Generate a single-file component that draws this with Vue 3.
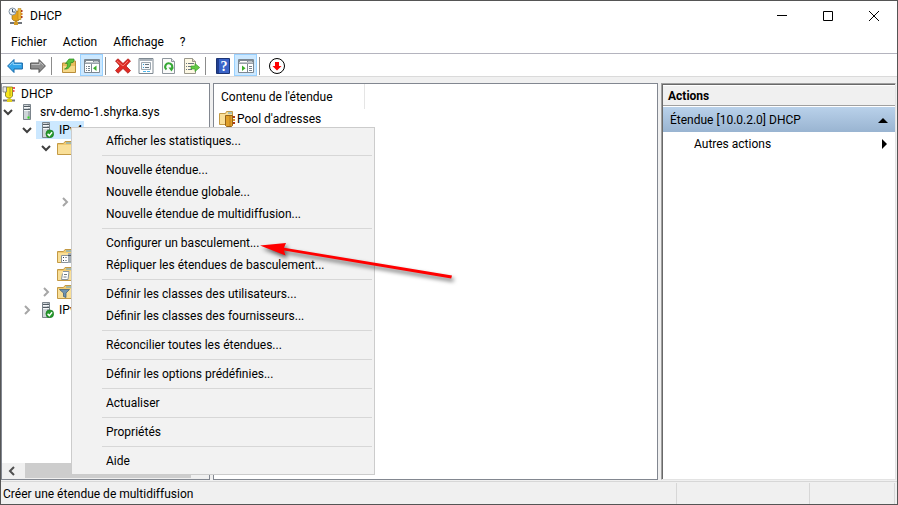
<script setup>
import { ref } from 'vue'

const menuBar = ['Fichier', 'Action', 'Affichage', '?']

const tools = [
  [{ id: 'back', label: 'Précédent' }, { id: 'forward', label: 'Suivant' }],
  [{ id: 'up', label: 'Dossier parent' }, { id: 'console', label: 'Arborescence', on: true }],
  [
    { id: 'delete', label: 'Supprimer' },
    { id: 'props', label: 'Propriétés' },
    { id: 'refresh', label: 'Actualiser' },
    { id: 'export', label: 'Exporter la liste' },
  ],
  [{ id: 'help', label: 'Aide' }, { id: 'pane', label: 'Volet Actions', on: true }],
  [{ id: 'down', label: 'Configurer' }],
]

const tree = ref([
  { level: 0, icon: 'dhcp', text: 'DHCP' },
  { level: 1, icon: 'server', text: 'srv-demo-1.shyrka.sys', open: true },
  { level: 2, icon: 'serverok', text: 'IPv4', open: true, selected: true },
  { level: 3, icon: 'folder', text: '', open: true },
  { level: 4 },
  { level: 4 },
  { level: 4, open: false },
  { level: 4 },
  { level: 4 },
  { level: 3, icon: 'options', text: '' },
  { level: 3, icon: 'policy', text: '' },
  { level: 3, icon: 'filter', text: '', open: false },
  { level: 2, icon: 'serverok', text: 'IPv6', open: false },
])

const indent = (row) => ({ paddingLeft: `${Math.max(row.level - 1, 0) * 19}px` })

const contextMenu = [
  ['Afficher les statistiques...'],
  ['Nouvelle étendue...', 'Nouvelle étendue globale...', 'Nouvelle étendue de multidiffusion...'],
  ['Configurer un basculement...', 'Répliquer les étendues de basculement...'],
  ['Définir les classes des utilisateurs...', 'Définir les classes des fournisseurs...'],
  ['Réconcilier toutes les étendues...'],
  ['Définir les options prédéfinies...'],
  ['Actualiser'],
  ['Propriétés'],
  ['Aide'],
]
</script>

<template>
  <div class="window">
    <header class="titlebar">
      <svg class="app-icon" viewBox="0 0 16 18">
        <path d="M4 4h8v8l-2 2H6l-2-2z" fill="#e3a21a" stroke="#8f6a17" stroke-width=".6" />
        <path d="M10 1.500h3v11h-3z" fill="#f0b83a" stroke="#a87a1c" stroke-width=".5" />
        <path d="M13 3h1.500v2H13zM13 9h1.500v2H13z" fill="#b03a16" />
        <path d="M13 6h1.500v2H13z" fill="#d8862a" />
        <path d="M7 13h2v3H7z" fill="#c28a1c" />
        <path d="M2 16h12" stroke="#70757b" stroke-width="2" />
        <path d="M6 15h4v3H6z" fill="#d39b28" />
        <circle cx="4.500" cy="4.500" r="3.500" fill="#eef3f8" stroke="#8393a3" />
        <path d="M4.500 2v3H7" fill="none" stroke="#3c5064" />
      </svg>
      <h1 class="title">DHCP</h1>
      <div class="caption">
        <button aria-label="Réduire"><svg viewBox="0 0 10 10"><path d="M0 4.500h10" /></svg></button>
        <button aria-label="Agrandir"><svg viewBox="0 0 10 10"><path d="M.5.5h9v9h-9z" /></svg></button>
        <button aria-label="Fermer"><svg viewBox="0 0 10 10"><path d="M0 0l10 10M10 0L0 10" /></svg></button>
      </div>
    </header>

    <nav class="menubar">
      <button v-for="m in menuBar" :key="m">{{ m }}</button>
    </nav>

    <div class="toolbar">
      <div v-for="(group, g) in tools" :key="g" class="group">
        <button v-for="t in group" :key="t.id" :class="{ on: t.on }" :aria-label="t.label">
          <svg v-if="t.id === 'back'" viewBox="0 0 16 16">
            <path d="M.6 8L7 1.500v3.500h8.400v6H7v3.500z" fill="#35a5ea" stroke="#1769a8" stroke-width="1" stroke-linejoin="round" />
            <path d="M2.500 7.500L6.200 4v2.500h8" fill="none" stroke="#92d4fa" />
          </svg>
          <svg v-else-if="t.id === 'forward'" viewBox="0 0 16 16">
            <path d="M15.400 8L9 1.500v3.500H.6v6H9v3.500z" fill="#8d8d8d" stroke="#555" stroke-width="1" stroke-linejoin="round" />
            <path d="M1.500 6.500h8.300V4l3.700 3.500" fill="none" stroke="#c0c0c0" />
          </svg>
          <svg v-else-if="t.id === 'up'" viewBox="0 0 16 16">
            <path d="M1.500 5h5l1-2h7v11.500h-13z" fill="#e8bd5c" stroke="#b98d3a" />
            <path d="M2 8h12v6H2z" fill="#f6d888" />
            <path d="M3.500 11C6.500 10 6.500 7.500 6.500 5.500H4.500L8 1h5v1.500l-1 2H9.800C9.800 8 8 11.500 3.500 11z" fill="#58c23c" stroke="#2d8a20" stroke-width=".7" />
          </svg>
          <svg v-else-if="t.id === 'console' || t.id === 'pane'" viewBox="0 0 16 16">
            <path d="M.5 1.500h15v13H.5z" fill="#fff" stroke="#7c8791" />
            <path d="M1 2h14v2.500H1z" fill="#7f8a94" />
            <path d="M2 3.500h7M10.500 3.500h1M12.500 3.500h1" stroke="#fff" />
            <path d="M1 5.500h14" stroke="#9aa3ab" />
            <template v-if="t.id === 'console'">
              <path d="M7.500 6v8" stroke="#7c8791" />
              <path d="M2 8.500h1M4 8.500h2M2 10.500h1M4 10.500h2M2 12.500h1M4 12.500h2" stroke="#77838e" />
              <path d="M12.500 7.500v5.500L9 10.250z" fill="#3aae2a" />
            </template>
            <template v-else>
              <path d="M9.500 6v8" stroke="#7c8791" />
              <path d="M11 8.500h3M11 10.500h3M11 12.500h3" stroke="#77838e" />
              <path d="M4 7.500v5.500l3.500-2.750z" fill="#3aae2a" />
            </template>
          </svg>
          <svg v-else-if="t.id === 'delete'" viewBox="0 0 16 16">
            <path d="M3 .8l5 4.700L13 .8l2.500 2.200L11 8l4.500 4.500-2.500 2.800L8 10.500l-5 4.800-2.500-2.800L5 8 .5 3z" fill="#e02a24" stroke="#a81512" stroke-width=".7" />
            <path d="M2 3l6 5 5-5" fill="none" stroke="#f47b70" />
          </svg>
          <svg v-else-if="t.id === 'props'" viewBox="0 0 16 16">
            <path d="M1 .5h14v15H1z" fill="#fff" stroke="#7f8992" />
            <path d="M1.500 1h13v2h-13z" fill="#aab2ba" />
            <path d="M3.500 4.500h9v7h-9z" fill="#f5f8fa" stroke="#9aa5ae" />
            <path d="M5 6.500h1M5 9.500h1" stroke="#2c9bd6" />
            <path d="M7 6.500h4M7 9.500h4" stroke="#68747e" />
            <path d="M5 13.500h3M9 13.500h3" stroke="#51b6e8" />
          </svg>
          <svg v-else-if="t.id === 'refresh'" viewBox="0 0 16 16">
            <path d="M1.500.5h9l3 3v12h-12z" fill="#fafafa" stroke="#8e969d" />
            <path d="M10.500.5v3h3" fill="#dfe3e6" stroke="#8e969d" />
            <path d="M5.500 11.500a3.500 3.500 0 1 1 5.500-1.500" fill="none" stroke="#35a835" stroke-width="2" />
            <path d="M7.500 9.500h5.500l-2.500 4z" fill="#35a835" />
          </svg>
          <svg v-else-if="t.id === 'export'" viewBox="0 0 16 16">
            <path d="M.5.5h8l3 3v12H.5z" fill="#fdf8e3" stroke="#99978b" />
            <path d="M8.500.5v3h3" fill="#e4dfc8" stroke="#99978b" />
            <path d="M2 5.500h1M4 5.500h6M2 8.500h1M4 8.500h4M2 11.500h1M4 11.500h4" stroke="#68747e" />
            <path d="M7 8h4V5.500L15.700 9.500 11 13.500V11H7z" fill="#63ca45" stroke="#2f9724" stroke-width=".6" />
          </svg>
          <svg v-else-if="t.id === 'help'" viewBox="0 0 16 16">
            <path d="M1.500.5h13v15h-13z" fill="#3a63c8" stroke="#1c3473" />
            <path d="M2 1h2v14H2z" fill="#203f91" />
            <text x="9" y="13" text-anchor="middle" class="question">?</text>
          </svg>
          <svg v-else viewBox="0 0 16 16">
            <circle cx="8" cy="8" r="7.500" fill="#fff" stroke="#000" />
            <path d="M6 4h4v4h2.500L8 12.500 3.500 8H6z" fill="#f00" />
          </svg>
        </button>
      </div>
    </div>

    <main class="panes">
      <section class="pane tree-pane">
        <ul class="tree">
          <li v-for="(row, i) in tree" :key="i" :style="indent(row)">
            <button v-if="row.open !== undefined" class="twisty" :class="{ open: row.open }" aria-label="Développer" @click="row.open = !row.open">
              <svg viewBox="0 0 10 10"><path d="M3 1l4 4-4 4" /></svg>
            </button>
            <span v-else-if="row.level" class="twisty"></span>
            <span v-if="row.icon" class="node" :class="{ selected: row.selected, root: !row.level }">
              <svg v-if="row.icon === 'dhcp'" viewBox="0 0 16 16">
                <path d="M4.500 1h6v9l-2 2h-3l-2-2V6z" fill="#f7e51c" stroke="#77701c" stroke-width=".8" />
                <path d="M8 2v8" stroke="#b3a617" />
                <path d="M1 .8h3.500V6H1z" fill="#e8e8e8" stroke="#777" stroke-width=".8" />
                <path d="M11 2h2M11 5h1.500" stroke="#e22" stroke-width="1.500" />
                <path d="M6.500 12h2v2h-2z" fill="#c7b91d" />
                <path d="M1 14.500h12" stroke="#777" stroke-width="2" />
                <path d="M5 13h5v3H5z" fill="#e1cf1c" />
              </svg>
              <svg v-else-if="row.icon.startsWith('server')" viewBox="0 0 16 16">
                <path d="M4.500.5h7v15h-7z" fill="#a9b1b7" stroke="#7b848b" />
                <path d="M5 1h4v14H5z" fill="#cfd5d9" />
                <path d="M5 2.500h6M5 5.500h6" stroke="#515b63" />
                <path d="M5 3.500h6M5 6.500h6" stroke="#f5f7f8" />
                <path v-if="row.icon === 'server'" d="M8.500 13.500h2" stroke="#2ee01f" stroke-width="2" />
                <template v-else>
                  <circle cx="11.800" cy="11.800" r="3.900" fill="#259a2b" stroke="#14701b" stroke-width=".6" />
                  <path d="M9.600 11.800l1.700 1.800 2.800-3.400" fill="none" stroke="#fff" stroke-width="1.400" />
                </template>
              </svg>
              <svg v-else viewBox="0 0 16 16">
                <path d="M.5 3.500h6l1.500-2h7.500v13H.5z" fill="#f1ca70" stroke="#c39a45" />
                <path d="M1 5h14v9H1z" fill="#f9df98" />
                <path d="M9 3h5" stroke="#5ba5d5" />
                <template v-if="row.icon === 'options'">
                  <path d="M4.500 7.500h7v7h-7z" fill="#fff" stroke="#89949c" />
                  <path d="M6 9.500h1M8.500 9.500h1M6 12.500h1M8.500 12.500h1" stroke="#34454f" />
                  <path d="M11 5h4v10h-4z" fill="#a4adb4" />
                  <path d="M11 7.500h4" stroke="#515b63" />
                </template>
                <template v-else-if="row.icon === 'policy'">
                  <path d="M6 5.500h6l-1 8H4.500l1-6" fill="#fff" stroke="#89949c" />
                  <path d="M7 8.500h3M6.500 11h3" stroke="#6e7981" />
                </template>
                <path v-else-if="row.icon === 'filter'" d="M2.500 5.500h10L9 9v4.500l-2.500-1V9z" fill="#6f93b1" stroke="#365670" stroke-width=".7" />
              </svg>
              <span>{{ row.text }}</span>
            </span>
          </li>
        </ul>
        <div class="scrollbar">
          <button class="scroll-left" aria-label="Défiler à gauche"><svg viewBox="0 0 10 10"><path d="M7 1L3 5l4 4" /></svg></button>
          <div class="track"><div class="thumb"></div></div>
        </div>
      </section>

      <section class="pane list-pane">
        <table>
          <thead><tr><th>Contenu de l'étendue</th></tr></thead>
          <tbody>
            <tr>
              <td>
                <div class="cell">
                  <svg viewBox="0 0 16 16">
                    <path d="M.5 2.500h6l1-2h6v13H.5z" fill="#f9df98" stroke="#c39a45" />
                    <path d="M9 2h4" stroke="#5ba5d5" />
                    <path d="M6.500 4.500h7v10l-1 1h-5l-1-1z" fill="#e0a02a" stroke="#946319" />
                    <path d="M11 5v10" stroke="#b97c1c" />
                    <path d="M15 5v2M15 11v2" stroke="#b03a16" stroke-width="2" />
                    <path d="M15 8v2" stroke="#d8962a" stroke-width="2" />
                  </svg>
                  <span>Pool d'adresses</span>
                </div>
              </td>
            </tr>
          </tbody>
        </table>
      </section>

      <aside class="actions">
        <h2>Actions</h2>
        <button class="band">Étendue [10.0.2.0] DHCP<svg viewBox="0 0 10 10"><path d="M0 8l5-5 5 5z" /></svg></button>
        <button class="more">Autres actions<svg viewBox="0 0 10 10"><path d="M4 0l5 5-5 5z" /></svg></button>
      </aside>
    </main>

    <footer class="status">
      <p>Créer une étendue de multidiffusion</p>
      <span></span>
      <span></span>
    </footer>

    <div class="context" role="menu">
      <div v-for="(group, g) in contextMenu" :key="g" class="section">
        <button v-for="item in group" :key="item" role="menuitem">{{ item }}</button>
      </div>
    </div>

    <svg class="pointer" viewBox="0 0 210 50">
      <path d="M10 15.500l26-2.500-2 4.800L202 45.500l-.8 3L34 20.500l1.500 5z" />
    </svg>
  </div>
</template>

<style>
body {
  margin: 0;
}
</style>

<style scoped>
.window {
  position: relative;
  box-sizing: border-box;
  display: flex;
  flex-direction: column;
  height: 100vh;
  border: 1px solid #555;
  background: #f0f0f0;
  color: #000;
  font: 12px/16px Roboto, "Open Sans", sans-serif;
  overflow: hidden;
}
button {
  margin: 0;
  padding: 0;
  border: 0;
  background: none;
  color: inherit;
  font: inherit;
  text-align: left;
}
svg {
  display: block;
  flex: none;
}
.titlebar {
  display: flex;
  align-items: center;
  height: 30px;
  padding-left: 7px;
  background: #fff;
}
.app-icon {
  width: 16px;
  height: 18px;
}
.title {
  flex: 1;
  margin: 0 0 0 6px;
  font-size: 12px;
  font-weight: 400;
}
.caption {
  display: flex;
}
.caption button {
  display: grid;
  place-items: center;
  width: 46px;
  height: 30px;
}
.caption svg {
  width: 10px;
  height: 10px;
  fill: none;
  stroke: #000;
}
.menubar {
  display: flex;
  gap: 16px;
  height: 22px;
  padding-left: 10px;
  background: #fff;
  border-bottom: 1px solid #b4b4be;
}
.toolbar {
  display: flex;
  height: 22px;
  padding-left: 2px;
  background: #fff;
  border-bottom: 1px solid #dadada;
}
.group {
  display: flex;
}
.group + .group::before {
  content: "";
  width: 1px;
  height: 18px;
  margin: 3px 5px 0 2px;
  background: #8c8c8c;
}
.group button {
  box-sizing: border-box;
  display: grid;
  justify-content: center;
  align-content: end;
  width: 23px;
  height: 22px;
  padding-bottom: 1px;
  border: 1px solid transparent;
}
.group button.on {
  background: #cce8ff;
  border-color: #99d1ff;
}
.group svg {
  width: 16px;
  height: 16px;
}
.question {
  fill: #fff;
  font: bold 14px "Liberation Serif", serif;
}
.panes {
  flex: 1;
  min-height: 0;
  display: grid;
  grid-template-columns: 209fr 445fr 235fr;
  gap: 3px;
  padding: 6px 1px 0 0;
}
.pane {
  min-width: 0;
  background: #fff;
  border: 1px solid #828790;
}
.tree-pane {
  display: flex;
  flex-direction: column;
}
.tree {
  flex: 1;
  margin: 0;
  padding: 1px 0 0;
  list-style: none;
}
.tree li {
  display: flex;
  align-items: center;
  height: 18px;
}
.twisty {
  display: grid;
  place-items: center;
  width: 11px;
  height: 18px;
  margin-right: 4px;
}
.twisty svg,
.scroll-left svg {
  width: 10px;
  height: 10px;
  fill: none;
  stroke: #a6a6a6;
  stroke-width: 2;
}
.twisty.open svg {
  transform: rotate(90deg);
  stroke: #404040;
}
.node {
  display: flex;
  align-items: center;
  gap: 5px;
  height: 18px;
  padding: 0 2px;
}
.node.root {
  gap: 3px;
  padding: 0;
}
.node.selected {
  background: #cce8ff;
}
.node svg,
.cell svg {
  width: 16px;
  height: 16px;
}
.scrollbar {
  display: flex;
  height: 16px;
  background: #f0f0f0;
}
.scroll-left {
  display: grid;
  place-items: center;
  width: 23px;
  padding-right: 4px;
}
.scroll-left svg {
  stroke: #505050;
}
.track {
  flex: 1;
  padding-right: 18px;
}
.thumb {
  height: 15px;
  background: #cdcdcd;
}
.list-pane table {
  width: 151px;
  border-spacing: 0;
}
.list-pane th {
  height: 25px;
  padding: 0 0 0 7px;
  border-right: 1px solid #e5e5e5;
  font-weight: 400;
  text-align: left;
}
.list-pane td {
  padding: 0 0 0 5px;
}
.cell {
  display: flex;
  align-items: center;
  gap: 2px;
  height: 20px;
}
.actions {
  display: flex;
  flex-direction: column;
  min-width: 0;
  border: 1px solid;
  border-color: #a0a0a0 #e3e3e3 #e3e3e3 #a0a0a0;
  box-shadow: inset 1px 1px #696969;
  background: #fff;
  padding: 2px 0 0 1px;
}
.actions h2 {
  margin: 0 0 1px;
  padding: 2px 0 1px 5px;
  background: #f0f0f0;
  border-bottom: 1px solid #a0a0a0;
  font-size: 12px;
  font-weight: 700;
}
.actions button {
  display: flex;
  align-items: center;
  justify-content: space-between;
  height: 25px;
  padding: 0 7px;
}
.actions svg {
  width: 10px;
  height: 10px;
}
.actions .band {
  background: linear-gradient(#b9d1ea, #99b4d1);
}
.actions .more {
  height: 24px;
  padding-left: 31px;
}
.status {
  display: grid;
  grid-template-columns: 676fr 133fr 85fr;
  height: 21px;
  margin-top: 1px;
  padding: 1px 2px 0 0;
  border-top: 1px solid #d7d7d7;
}
.status p {
  margin: 0;
  padding: 3px 0 0 2px;
  border-right: 1px solid #d7d7d7;
}
.status span {
  border-right: 1px solid #d7d7d7;
}
.context {
  position: absolute;
  left: 70px;
  top: 126px;
  box-sizing: border-box;
  width: 304px;
  padding: 2px;
  background: #f2f2f2;
  border: 1px solid #ccc;
}
.section {
  display: flex;
  flex-direction: column;
}
.section + .section::before {
  content: "";
  height: 1px;
  margin: 3px 0 3px 28px;
  background: #d7d7d7;
}
.section button {
  height: 22px;
  padding-left: 32px;
}
.pointer {
  position: absolute;
  left: 249px;
  top: 229px;
  width: 210px;
  height: 50px;
  overflow: visible;
  fill: #f00;
  filter: drop-shadow(2px 3px 2px rgba(0, 0, 0, 0.6));
  pointer-events: none;
}
</style>
